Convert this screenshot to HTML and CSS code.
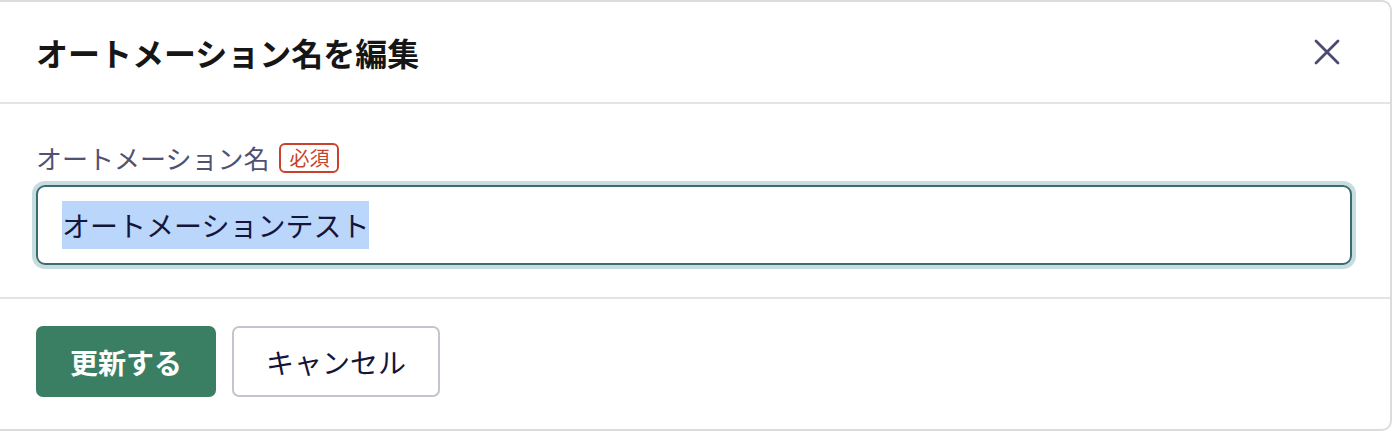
FILE: index.html
```html
<!DOCTYPE html>
<html lang="ja">
<head>
<meta charset="utf-8">
<title>オートメーション名を編集</title>
<link rel="stylesheet" href="styles.css">
</head>
<body>
<div class="modal">
  <div class="modal-header">
    <h2 class="modal-title">オートメーション名を編集</h2>
    <button class="close-btn" aria-label="閉じる">
      <svg width="26" height="26" viewBox="0 0 26 26"><path d="M2 2 L24 24 M24 2 L2 24" stroke="#4b4a72" stroke-width="2.8" stroke-linecap="round" fill="none"/></svg>
    </button>
  </div>
  <div class="modal-body">
    <div class="field-label">
      <span class="label-text">オートメーション名</span>
      <span class="badge">必須</span>
    </div>
    <div class="text-input" role="textbox"><span class="selected">オートメーションテスト</span></div>
  </div>
  <div class="modal-footer">
    <button class="btn btn-primary">更新する</button>
    <button class="btn btn-secondary">キャンセル</button>
  </div>
</div>
</body>
</html>
```
FILE: styles.css
```css
html, body {
  margin: 0;
  padding: 0;
  background: #ffffff;
}
body {
  font-family: "Noto Sans CJK JP", "Noto Sans", sans-serif;
  overflow: hidden;
}
.modal {
  box-sizing: border-box;
  width: 1404px;
  height: 431px;
  margin-left: -12px;
  border: 2px solid #dcdcdc;
  border-radius: 10px;
  background: #fff;
  display: flex;
  flex-direction: column;
}
.modal-header {
  display: flex;
  align-items: center;
  justify-content: space-between;
  padding: 26px 50px 26px 46px;
  border-bottom: 2px solid #e1e4e8;
}
.modal-title {
  margin: 0;
  font-size: 32px;
  line-height: 48px;
  font-weight: 700;
  color: #161616;
}
.close-btn {
  border: 0;
  background: transparent;
  padding: 0;
  width: 26px;
  height: 26px;
  display: flex;
  cursor: pointer;
}
.modal-body {
  padding: 36px 38px 32px 46px;
  border-bottom: 2px solid #e1e4e8;
}
.field-label {
  display: flex;
  align-items: center;
  gap: 10px;
  height: 36px;
  margin-bottom: 9px;
}
.label-text {
  font-size: 26px;
  color: #515172;
  line-height: 36px;
}
.badge {
  box-sizing: border-box;
  height: 30px;
  padding: 0 8px;
  border: 2px solid #c8432c;
  border-radius: 6px;
  color: #c8432c;
  font-size: 20px;
  line-height: 26px;
  display: flex;
  align-items: center;
}
.text-input {
  box-sizing: border-box;
  height: 80px;
  border: 2px solid #3b6a6f;
  border-radius: 9px;
  box-shadow: 0 0 0 4px #c7dcdf;
  padding: 0 24px;
  display: flex;
  align-items: center;
  font-size: 28px;
  color: #15153a;
}
.selected {
  display: inline-block;
  background: #bad6fb;
  line-height: 48px;
}
.modal-footer {
  display: flex;
  gap: 16px;
  padding: 27px 46px 0;
}
.btn {
  box-sizing: border-box;
  height: 71px;
  padding: 0 32px;
  border-radius: 7px;
  font-family: "Noto Sans CJK JP", "Noto Sans", sans-serif;
  font-size: 28px;
  cursor: pointer;
}
.btn-primary {
  background: #3a7f63;
  border: 2px solid #3a7f63;
  color: #ffffff;
  font-weight: 700;
}
.btn-secondary {
  background: #ffffff;
  border: 2px solid #c3c5cc;
  color: #15153a;
}
```
